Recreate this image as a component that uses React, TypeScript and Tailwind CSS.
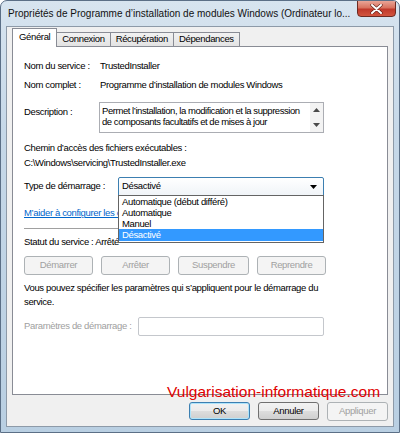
import React from 'react'

const ui = { fontFamily: '"Liberation Sans", Arial, sans-serif' }

function Tab({ label, active }: { label: string; active?: boolean }) {
  if (active) {
    return (
      <div className="relative z-10 -mb-px flex h-[19px] items-center border border-b-0 border-[#898c95] bg-white px-[6px] pb-[2px]">
        {label}
      </div>
    )
  }
  return (
    <div className="mt-[4px] -ml-px flex h-[14px] items-center border border-b-0 border-[#898c95] bg-[linear-gradient(180deg,#f2f2f2,#e3e3e3)] px-[5px]">
      {label}
    </div>
  )
}

function DisabledButton({ label, w }: { label: string; w: string }) {
  return (
    <div
      className={`flex h-[19px] items-center justify-center rounded-[3px] border border-[#adb2b5] bg-[#f4f4f4] text-[#a0a0a0] ${w}`}
    >
      {label}
    </div>
  )
}

export default function App() {
  return (
    <div
      className="relative flex h-[433px] w-[400px] flex-col overflow-hidden rounded-t-[7px] border border-[#5b6f86] bg-[linear-gradient(180deg,#d7e4ef_0%,#c6d8e8_30%,#b9cfe2_100%)] text-[9.5px] tracking-[-0.35px] text-[#000]"
      style={ui}
    >
      {/* title bar */}
      <div className="relative flex h-[25px] shrink-0 items-center whitespace-nowrap pl-[7px] text-[10px] tracking-normal text-[#111]">
        Propriétés de Programme d’installation de modules Windows (Ordinateur lo...
        <div className="absolute right-[3px] top-[-1px] flex h-[17px] w-[39px] items-center justify-center rounded-b-[4px] border border-[#6d2a22] bg-[linear-gradient(180deg,#e9a597_0%,#d8725f_45%,#c0392b_55%,#d2553f_100%)]">
          <svg width="13" height="10" viewBox="0 0 13 10">
            <path d="M2 1 L11 9 M11 1 L2 9" stroke="#5a1c14" strokeWidth="3.2" strokeLinecap="round" />
            <path d="M2 1 L11 9 M11 1 L2 9" stroke="#ffffff" strokeWidth="2" strokeLinecap="round" />
          </svg>
        </div>
      </div>

      {/* client area */}
      <div className="mx-[5px] mb-[5px] flex flex-1 flex-col border border-[#8d9aa8] bg-[#f0f0f0] px-[5px] pt-[1px]">
        {/* tabs */}
        <div className="flex items-start">
          <Tab label="Général" active />
          <Tab label="Connexion" />
          <Tab label="Récupération" />
          <Tab label="Dépendances" />
        </div>

        {/* panel */}
        <div className="relative flex h-[349px] flex-col border border-[#898c95] bg-white pl-[11px]">
          <div className="mt-[12px] flex h-[15px] items-center">
            <span className="w-[76px]">Nom du service :</span>
            <span>TrustedInstaller</span>
          </div>
          <div className="mt-[4px] flex h-[15px] items-center">
            <span className="w-[76px]">Nom complet :</span>
            <span>Programme d’installation de modules Windows</span>
          </div>
          <div className="mt-[9px] flex">
            <span className="mt-[3px] w-[75px]">Description :</span>
            <div className="flex h-[31px] w-[225px] border border-[#abadb3] bg-white">
              <div className="flex-1 pl-[2px] pt-[2px] leading-[11px] tracking-[-0.45px]">
                Permet l’installation, la modification et la suppression de composants facultatifs et de mises à jour
              </div>
              <div className="flex w-[13px] flex-col items-center justify-between bg-[#f3f3f3] py-[5px]">
                <svg width="7" height="4" viewBox="0 0 7 4">
                  <path d="M0 4 L3.5 0 L7 4 Z" fill="#4a4a4a" />
                </svg>
                <svg width="7" height="4" viewBox="0 0 7 4">
                  <path d="M0 0 L3.5 4 L7 0 Z" fill="#4a4a4a" />
                </svg>
              </div>
            </div>
          </div>
          <div className="mt-[8px] flex h-[15px] items-center">Chemin d’accès des fichiers exécutables :</div>
          <div className="flex h-[15px] items-center">C:\Windows\servicing\TrustedInstaller.exe</div>

          <div className="mt-[6px] flex items-center">
            <span className="w-[94px]">Type de démarrage :</span>
            <div className="relative">
              <div className="flex h-[19px] w-[206px] items-center justify-between rounded-t-[2px] border border-[#3c7fb1] bg-[linear-gradient(180deg,#ffffff,#f0f4f8)] pl-[3px] pr-[6px]">
                <span>Désactivé</span>
                <svg width="7" height="4" viewBox="0 0 7 4">
                  <path d="M0 0 L3.5 4 L7 0 Z" fill="#000" />
                </svg>
              </div>
              {/* open dropdown list */}
              <div className="absolute left-0 top-[18px] z-20 flex w-[206px] flex-col border border-[#646464] bg-white pb-px leading-[11px]">
                <div className="h-[11px] pl-[3px]">Automatique (début différé)</div>
                <div className="h-[11px] pl-[3px]">Automatique</div>
                <div className="h-[11px] pl-[3px]">Manuel</div>
                <div className="h-[12px] bg-[#3399ff] pl-[3px] text-white">Désactivé</div>
              </div>
            </div>
          </div>

          <div className="mt-[10px] flex h-[15px] items-center whitespace-nowrap text-[#0066cc] underline">
            M’aider à configurer les options de récupération de service.
          </div>
          <div className="mr-[63px] mt-[7px] h-px bg-[#a0a0a0]" />

          <div className="mt-[6px] flex h-[15px] items-center">Statut du service : Arrêté</div>
          <div className="mt-[6px] flex gap-[8px]">
            <DisabledButton label="Démarrer" w="w-[69px]" />
            <DisabledButton label="Arrêter" w="w-[69px]" />
            <DisabledButton label="Suspendre" w="w-[71px]" />
            <DisabledButton label="Reprendre" w="w-[69px]" />
          </div>

          <div className="mt-[6px] w-[306px] leading-[14px]">
            Vous pouvez spécifier les paramètres qui s’appliquent pour le démarrage du service.
          </div>
          <div className="mt-[8px] flex items-center">
            <span className="w-[114px] whitespace-nowrap text-[#a0a0a0]">Paramètres de démarrage :</span>
            <div className="h-[19px] w-[186px] rounded-[2px] border border-[#c4c7cc] bg-white" />
          </div>

          <div className="absolute left-[154px] top-[333px] z-30 whitespace-nowrap text-[15.5px] tracking-normal text-[#e00000]">
            Vulgarisation-informatique.com
          </div>
        </div>

        {/* bottom buttons */}
        <div className="mt-[7px] flex justify-end gap-[8px]">
          <div className="flex h-[18px] w-[61px] items-center justify-center rounded-[3px] border border-[#3c7fb1] bg-[linear-gradient(180deg,#f2f2f2_0%,#ebebeb_50%,#dddddd_51%,#cfcfcf_100%)] shadow-[inset_0_0_0_1px_#aee4fb]">
            OK
          </div>
          <div className="flex h-[18px] w-[61px] items-center justify-center rounded-[3px] border border-[#707070] bg-[linear-gradient(180deg,#f2f2f2_0%,#ebebeb_50%,#dddddd_51%,#cfcfcf_100%)]">
            Annuler
          </div>
          <DisabledButton label="Appliquer" w="w-[61px] h-[18px]" />
        </div>
      </div>
    </div>
  )
}
